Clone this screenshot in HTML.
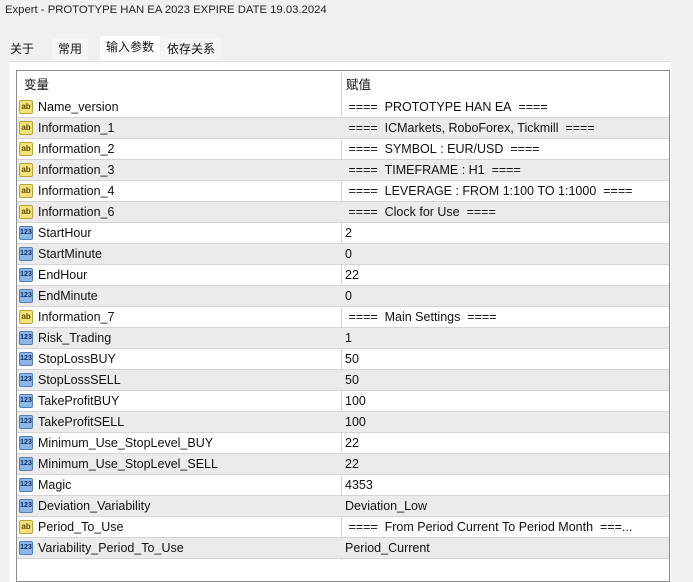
<!DOCTYPE html>
<html><head><meta charset="utf-8"><style>
body{margin:0;width:693px;height:571px;background:#f0f0f0;font-family:"Liberation Sans","Noto Sans CJK SC",sans-serif;font-size:12.5px;color:#111;position:relative;overflow:hidden}
.title{position:absolute;left:5px;top:4px;font-size:11.3px;color:#222}
.tab{position:absolute;top:38px;height:22px;line-height:22px;font-size:12px;padding:0 6px}
.panel{position:absolute;left:9px;top:61px;width:662px;height:520px;background:#fff;border-top:1px solid #e0e0e0}
.tbl{position:absolute;left:16px;top:70px;width:652px;height:510px;border:1px solid #8c8c8c;background:#fff}
.hdr{position:absolute;left:0;top:0;width:652px;height:24px}
.row{position:absolute;left:0;width:652px;height:20px;border-bottom:1px solid #d4d4d4;line-height:20px}
.g{background:#ebebeb}
.n{position:absolute;left:21px;white-space:nowrap}
.v{position:absolute;left:328px;white-space:nowrap}
.div{position:absolute;left:324px;top:0;width:1px;height:489px;background:#d4d4d4}
.ic{position:absolute;left:2px;top:3px;width:14px;height:14px;border-radius:2px;font-size:8px;line-height:14px;text-align:center;font-weight:bold}
.ab{background:#f5e27a;border:1px solid #b8a23a;color:#5a4a00;width:12px;height:12px;line-height:12px}
.nm{background:#8db8e6;border:1px solid #4f7fb6;color:#0a2a66;width:12px;height:12px;line-height:12px;font-size:7px}
</style></head><body>
<div class="title">Expert - PROTOTYPE HAN EA 2023 EXPIRE DATE 19.03.2024</div>
<div class="tab" style="left:4px">关于</div>
<div class="tab" style="left:52px;background:#f5f5f5">常用</div>
<div class="tab" style="left:100px;top:36px;background:#fff;height:25px">输入参数</div>
<div class="tab" style="left:161px;background:#f5f5f5">依存关系</div>
<div class="panel"></div>
<div class="tbl">
<div class="hdr"><span style="position:absolute;left:7px;top:3px">变量</span><span style="position:absolute;left:329px;top:3px">赋值</span></div>
<div class="div"></div>
<div id="rows"></div>
</div>
<script>
var d=[["a","Name_version"," ====  PROTOTYPE HAN EA  ===="],["a","Information_1"," ====  ICMarkets, RoboForex, Tickmill  ===="],["a","Information_2"," ====  SYMBOL : EUR/USD  ===="],["a","Information_3"," ====  TIMEFRAME : H1  ===="],["a","Information_4"," ====  LEVERAGE : FROM 1:100 TO 1:1000  ===="],["a","Information_6"," ====  Clock for Use  ===="],["n","StartHour","2"],["n","StartMinute","0"],["n","EndHour","22"],["n","EndMinute","0"],["a","Information_7"," ====  Main Settings  ===="],["n","Risk_Trading","1"],["n","StopLossBUY","50"],["n","StopLossSELL","50"],["n","TakeProfitBUY","100"],["n","TakeProfitSELL","100"],["n","Minimum_Use_StopLevel_BUY","22"],["n","Minimum_Use_StopLevel_SELL","22"],["n","Magic","4353"],["n","Deviation_Variability","Deviation_Low"],["a","Period_To_Use"," ====  From Period Current To Period Month  ===..."],["n","Variability_Period_To_Use","Period_Current"]];
var h="";d.forEach(function(r,i){h+='<div class="row'+(i%2?' g':'')+'" style="top:'+(26+i*21)+'px"><div class="ic '+(r[0]=="a"?'ab">ab':'nm">123')+'</div><span class="n">'+r[1]+'</span><span class="v">'+r[2].replace(/ /g,"&nbsp;")+'</span></div>';});
document.getElementById("rows").innerHTML=h;
</script>
</body></html>
